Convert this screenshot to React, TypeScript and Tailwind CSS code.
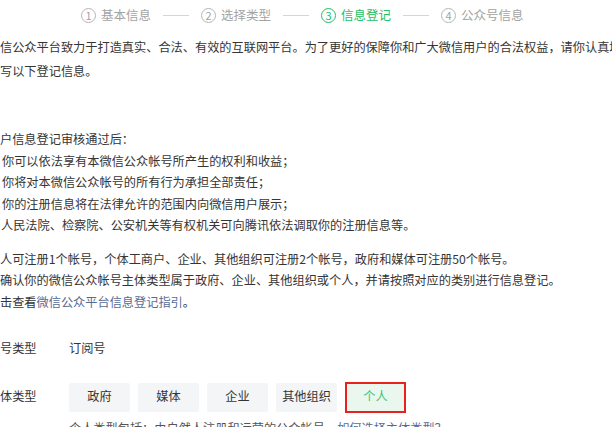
//@ts-nocheck
const steps = [
  { n: "1", label: "基本信息" },
  { n: "2", label: "选择类型" },
  { n: "3", label: "信息登记", active: true },
  { n: "4", label: "公众号信息" },
];

const types = ["政府", "媒体", "企业", "其他组织"];

function Step({ n, label, active }) {
  return (
    <div
      className={`flex items-center gap-[5px] ${
        active ? "text-[#22c066]" : "text-[#a3a3a3]"
      }`}
    >
      <span
        className={`flex h-[15px] w-[15px] items-center justify-center rounded-full border text-[11px] leading-none ${
          active ? "border-[#22c066]" : "border-[#b5b5b5]"
        }`}
      >
        {n}
      </span>
      <span className="text-[12.5px]">{label}</span>
    </div>
  );
}

export default function App() {
  return (
    <div
      className="relative h-[427px] w-[612px] overflow-hidden bg-white text-[#353535]"
      style={{ fontFamily: '"Noto Sans CJK SC", "Noto Sans", sans-serif' }}
    >
      <div className="flex h-[30px] items-center pl-[81px]">
        {steps.map((s, i) => (
          <div key={s.n} className="flex items-center">
            <Step {...s} />
            {i < steps.length - 1 && (
              <div className="mx-[12px] h-px w-[26px] bg-[#d5d5d5]" />
            )}
          </div>
        ))}
      </div>

      <div className="text-[12.2px] leading-[21.5px]">
        <div className="mt-[5px] whitespace-nowrap leading-[24px]">
          <p>信公众平台致力于打造真实、合法、有效的互联网平台。为了更好的保障你和广大微信用户的合法权益，请你认真填</p>
          <p>写以下登记信息。</p>
        </div>

        <div className="mt-[46px] whitespace-nowrap">
          <p>户信息登记审核通过后：</p>
          <p className="pl-[2px]">你可以依法享有本微信公众帐号所产生的权利和收益；</p>
          <p className="pl-[2px]">你将对本微信公众帐号的所有行为承担全部责任；</p>
          <p className="pl-[2px]">你的注册信息将在法律允许的范围内向微信用户展示；</p>
          <p className="pl-[1px]">人民法院、检察院、公安机关等有权机关可向腾讯依法调取你的注册信息等。</p>
        </div>

        <div className="mt-[12px] whitespace-nowrap">
          <p>人可注册1个帐号，个体工商户、企业、其他组织可注册2个帐号，政府和媒体可注册50个帐号。</p>
          <p>确认你的微信公众帐号主体类型属于政府、企业、其他组织或个人，并请按照对应的类别进行信息登记。</p>
          <p>
            击查看<span className="text-[#576b95]">微信公众平台信息登记指引</span>。
          </p>
        </div>

        <div className="mt-[25px] flex">
          <div className="w-[69px]">号类型</div>
          <div>订阅号</div>
        </div>

        <div className="mt-[22px] flex items-center">
          <div className="w-[69px]">体类型</div>
          <div className="flex items-center gap-[8px]">
            {types.map((t) => (
              <div
                key={t}
                className="flex h-[29px] w-[61px] items-center justify-center rounded-[2px] bg-[#f4f5f7]"
              >
                {t}
              </div>
            ))}
            <div className="flex h-[31px] w-[61px] items-center justify-center border-2 border-[#e8221b] bg-[#e9f7ef] text-[#3cc476]">
              个人
            </div>
          </div>
        </div>

        <p className="mt-[5px] whitespace-nowrap pl-[69px] text-[#555]">
          个人类型包括：由自然人注册和运营的公众帐号。
          <span className="text-[#576b95]">如何选择主体类型？</span>
        </p>
      </div>
    </div>
  );
}
